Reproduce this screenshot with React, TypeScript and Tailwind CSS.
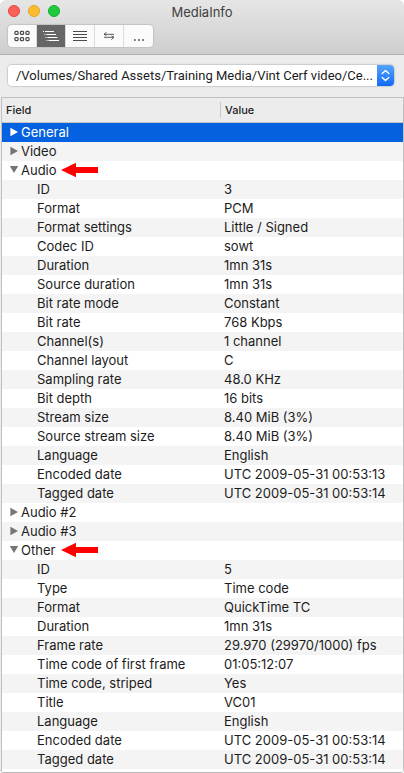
import React, { useState } from 'react';

type Row = { field: string; value: string };
type Section = { name: string; marked?: boolean; rows: Row[] };

const sections: Section[] = [
  { name: 'General', rows: [] },
  { name: 'Video', rows: [] },
  {
    name: 'Audio',
    marked: true,
    rows: [
      { field: 'ID', value: '3' },
      { field: 'Format', value: 'PCM' },
      { field: 'Format settings', value: 'Little / Signed' },
      { field: 'Codec ID', value: 'sowt' },
      { field: 'Duration', value: '1mn 31s' },
      { field: 'Source duration', value: '1mn 31s' },
      { field: 'Bit rate mode', value: 'Constant' },
      { field: 'Bit rate', value: '768 Kbps' },
      { field: 'Channel(s)', value: '1 channel' },
      { field: 'Channel layout', value: 'C' },
      { field: 'Sampling rate', value: '48.0 KHz' },
      { field: 'Bit depth', value: '16 bits' },
      { field: 'Stream size', value: '8.40 MiB (3%)' },
      { field: 'Source stream size', value: '8.40 MiB (3%)' },
      { field: 'Language', value: 'English' },
      { field: 'Encoded date', value: 'UTC 2009-05-31 00:53:13' },
      { field: 'Tagged date', value: 'UTC 2009-05-31 00:53:14' },
    ],
  },
  { name: 'Audio #2', rows: [] },
  { name: 'Audio #3', rows: [] },
  {
    name: 'Other',
    marked: true,
    rows: [
      { field: 'ID', value: '5' },
      { field: 'Type', value: 'Time code' },
      { field: 'Format', value: 'QuickTime TC' },
      { field: 'Duration', value: '1mn 31s' },
      { field: 'Frame rate', value: '29.970 (29970/1000) fps' },
      { field: 'Time code of first frame', value: '01:05:12:07' },
      { field: 'Time code, striped', value: 'Yes' },
      { field: 'Title', value: 'VC01' },
      { field: 'Language', value: 'English' },
      { field: 'Encoded date', value: 'UTC 2009-05-31 00:53:14' },
      { field: 'Tagged date', value: 'UTC 2009-05-31 00:53:14' },
    ],
  },
];

const GridIcon = () => (
  <svg width="16" height="12" viewBox="0 0 16 12" fill="none" stroke="currentColor" strokeWidth="1.2">
    {[2.8, 9].map((y) =>
      [2.5, 8, 13.5].map((x) => <rect key={`${x}-${y}`} x={x - 1.6} y={y - 1.4} width="3.2" height="3" rx="1" />)
    )}
  </svg>
);

const TreeIcon = () => (
  <svg width="18" height="14" viewBox="0 0 18 14" fill="none" stroke="currentColor">
    <path d="M1 2.5h1M2.4 5.5h1M3.4 8.5h1M4.4 11.5h1" strokeWidth="1.2" />
    <path d="M3 2.5h9M4.4 5.5h9.6M5.4 8.5h10M6.4 11.5h10.6" strokeWidth="1.2" />
  </svg>
);

const TextIcon = () => (
  <svg width="14" height="12" viewBox="0 0 14 12" stroke="currentColor" strokeWidth="1">
    <path d="M0 1.5h14M0 4.5h14M0 7.5h14M0 10.5h14" />
  </svg>
);

const SwapIcon = () => (
  <svg width="12" height="10" viewBox="0 0 12 10" fill="none" stroke="currentColor" strokeWidth="0.9">
    <path d="M11 3.3H1L3.6 1.2M1 3.3l2.4 1.4M1 6.3h10L8.6 4.8M11 6.3L8.4 8.6" />
  </svg>
);

const MoreIcon = () => (
  <svg width="12" height="12" viewBox="0 0 12 12" fill="currentColor">
    <circle cx="1.9" cy="10" r="0.9" />
    <circle cx="6" cy="10" r="0.9" />
    <circle cx="10.1" cy="10" r="0.9" />
  </svg>
);

const views = [
  { name: 'Easy', icon: <GridIcon /> },
  { name: 'Tree', icon: <TreeIcon /> },
  { name: 'Text', icon: <TextIcon /> },
  { name: 'Compare', icon: <SwapIcon /> },
  { name: 'More', icon: <MoreIcon /> },
];

const Triangle: React.FC<{ open: boolean }> = ({ open }) => (
  <svg width="10" height="10" viewBox="0 0 10 10" fill="currentColor">
    {open ? <path d="M0.8 1h8.4L5 8z" /> : <path d="M1.4 0.8v8.4L9 5z" />}
  </svg>
);

const RedArrow = () => (
  <svg width="37" height="16" viewBox="0 0 37 16" fill="#fe0000">
    <path d="M0 8L15 0.8V5h22v6H15v4.2z" />
  </svg>
);

const App: React.FC = () => {
  const [view, setView] = useState('Tree');
  const [selected, setSelected] = useState('General');
  const [open, setOpen] = useState<string[]>(['Audio', 'Other']);

  const toggle = (name: string) => {
    setSelected(name);
    setOpen(open.includes(name) ? open.filter((n) => n !== name) : [...open, name]);
  };

  return (
    <div className="bg-white font-['Inter',sans-serif] text-[13px] text-[#1c1c1c]">
      <div className="overflow-hidden rounded-t-md rounded-b-sm border-b border-[#b8b8b8] bg-[#ececec]">
        <header className="border-b border-[#b1b1b1] bg-linear-to-b from-[#e6e6e6] to-[#cecece] px-2 pb-[7px]">
          <div className="grid h-[25px] grid-cols-[1fr_auto_1fr] items-start">
            <div className="flex gap-2 pt-[5px]">
              <button aria-label="Close" className="size-3 rounded-full border border-[#e2463f] bg-[#fc605b]" />
              <button aria-label="Minimize" className="size-3 rounded-full border border-[#e1a325] bg-[#fdbc30]" />
              <button aria-label="Zoom" className="size-3 rounded-full border border-[#17ab2c] bg-[#1fca3b]" />
            </div>
            <h1 className="pt-[2px] leading-5 text-[#404040]">MediaInfo</h1>
          </div>
          <div className="flex h-[22px] w-fit divide-x divide-[#dcdcdc] overflow-hidden rounded-sm bg-[#fbfbfb] shadow-[0_0_1px_1px_#c2c2c2]">
            {views.map((item) => (
              <button
                key={item.name}
                aria-label={item.name}
                aria-pressed={view === item.name}
                onClick={() => setView(item.name)}
                className={`flex w-[29px] items-center justify-center ${
                  view === item.name ? 'bg-[#666666] text-white' : 'text-[#4a4a4a]'
                }`}
              >
                {item.icon}
              </button>
            ))}
          </div>
        </header>

        <div className="py-[10px] pr-[10px] pl-2">
          <div className="relative overflow-hidden rounded-sm shadow-[0_0_1px_1px_#cbcbcb]">
            <select
              aria-label="File"
              className="block h-[21px] w-full appearance-none truncate bg-white pr-5 pl-2 font-['Roboto',sans-serif] text-[13px] leading-5 text-[#1c1c1c]"
            >
              <option>/Volumes/Shared Assets/Training Media/Vint Cerf video/Ce...</option>
            </select>
            <div className="pointer-events-none absolute inset-y-0 right-0 flex w-[17px] items-center justify-center bg-linear-to-b from-[#55a3fb] to-[#1168f8]">
              <svg width="9" height="13" viewBox="0 0 9 13" fill="none" stroke="white" strokeWidth="1.4" strokeLinecap="round" strokeLinejoin="round">
                <path d="M1.2 4.6l3.3-3.2 3.3 3.2M1.2 8.4l3.3 3.2 3.3-3.2" />
              </svg>
            </div>
          </div>
        </div>

        <main className="mt-px ml-px border-x border-t border-[#c0c0c0] bg-white pb-[3px]">
          <table className="w-full table-fixed border-collapse text-left">
            <thead>
              <tr className="h-6 border-b border-[#c4c4c4] bg-[#ececec] text-[11px] leading-4">
                <th className="w-[219px] py-[3px] font-medium">
                  <div className="border-r border-[#c8c8c8] pl-1">Field</div>
                </th>
                <th className="pl-1 font-medium">Value</th>
              </tr>
            </thead>
            <tbody className="[&>tr:nth-child(even)]:bg-[#f4f4f4]">
              {sections.map((section) => {
                const isOpen = open.includes(section.name);
                const isSelected = selected === section.name;
                return (
                  <React.Fragment key={section.name}>
                    <tr className={isSelected ? 'bg-[#0461e0] text-white' : ''}>
                      <td className="h-[19px] p-0 leading-[19px]">
                        <div className="flex items-center gap-1 pl-[7px]">
                          <button
                            aria-expanded={isOpen}
                            onClick={() => toggle(section.name)}
                            className="flex min-w-12 items-center gap-[2px]"
                          >
                            <span className={isSelected ? 'text-white' : 'text-[#767676]'}>
                              <Triangle open={isOpen} />
                            </span>
                            {section.name}
                          </button>
                          {section.marked && <RedArrow />}
                        </div>
                      </td>
                      <td className="p-0" />
                    </tr>
                    {isOpen &&
                      section.rows.map((row) => (
                        <tr key={row.field}>
                          <td className="h-[19px] p-0 pl-[35px] leading-[19px] whitespace-nowrap">{row.field}</td>
                          <td className="p-0 pl-[3px] leading-[19px] whitespace-nowrap">{row.value}</td>
                        </tr>
                      ))}
                  </React.Fragment>
                );
              })}
            </tbody>
          </table>
        </main>
      </div>
    </div>
  );
};

export default App;
